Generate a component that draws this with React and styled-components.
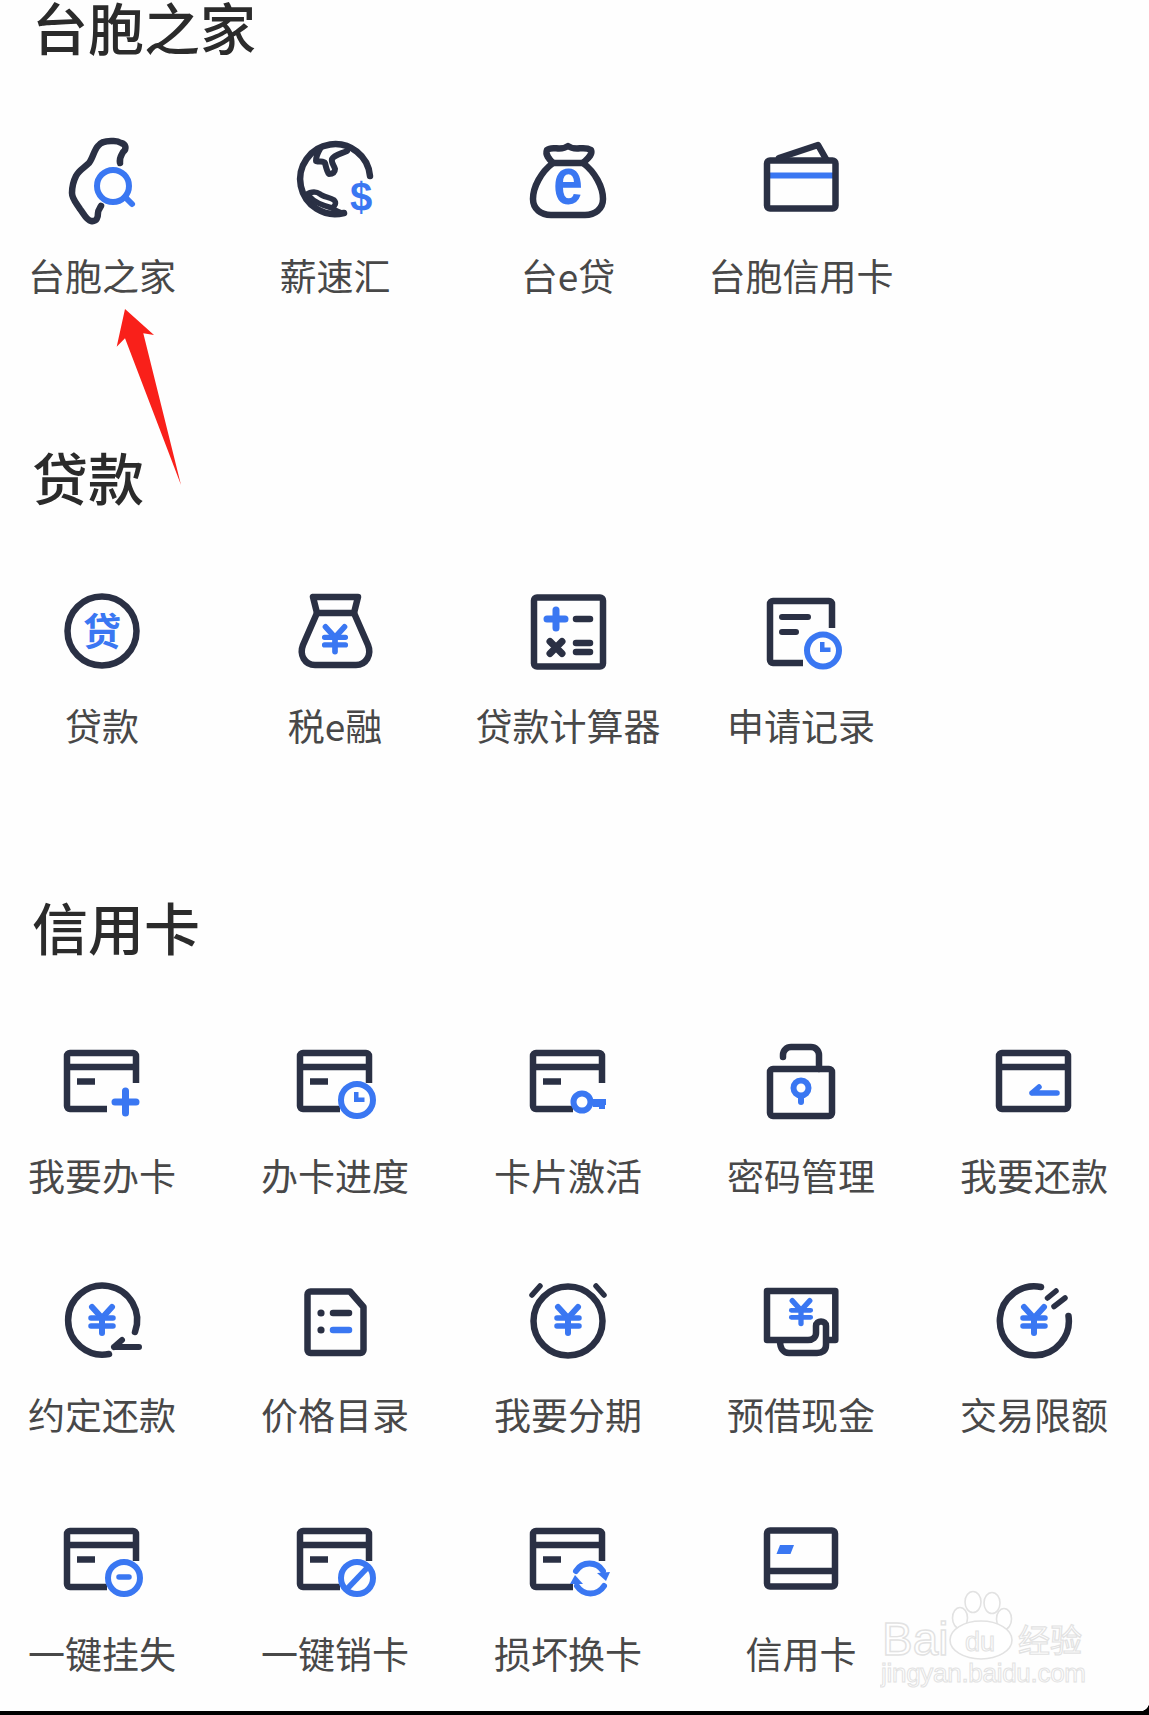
import styled, { createGlobalStyle } from 'styled-components';

const DARK = '#2a3044';
const BLUE = '#3a77f2';

const GlobalStyle = createGlobalStyle`
  html, body { margin: 0; padding: 0; background: #fff; }
`;

const Page = styled.div`
  position: relative;
  width: 1149px;
  height: 1715px;
  overflow: hidden;
  display: flex;
  flex-direction: column;
  background: #fefefe;
  font-family: "Noto Sans CJK SC", "Liberation Sans", sans-serif;
`;

const Section = styled.section`
  margin-bottom: 150px;
  &:last-of-type { margin-bottom: 0; }
`;

const Title = styled.h2`
  margin: 0 0 85px 32px;
  height: 52px;
  font-size: 56px;
  line-height: 52px;
  font-weight: 500;
  color: #2b2b2b;
`;

const Grid = styled.div`
  display: grid;
  grid-template-columns: repeat(5, 204px);
  column-gap: 29px;
  row-gap: 76px;
`;

const Tile = styled.div`
  display: flex;
  flex-direction: column;
  align-items: center;
  gap: 23px;
`;

const Label = styled.span`
  font-size: 37px;
  line-height: 50px;
  color: #484848;
  white-space: nowrap;
`;

const BottomBar = styled.div`
  position: relative;
  margin-top: auto;
  height: 4px;
  background: #000;
  &::before {
    content: '';
    position: absolute;
    right: 0;
    bottom: 100%;
    width: 9px;
    height: 9px;
    background: radial-gradient(circle at 0 0, transparent 9px, #000 9.5px);
  }
`;

const IconSvg = styled.svg`
  display: block;
  width: 90px;
  height: 90px;
  overflow: visible;
`;

const DarkLine = styled.path`
  fill: none;
  stroke: ${DARK};
  stroke-width: ${(p) => p.$w || 6.5};
  stroke-linecap: round;
  stroke-linejoin: round;
`;

const BlueLine = styled.path`
  fill: none;
  stroke: ${BLUE};
  stroke-width: ${(p) => p.$w || 6};
  stroke-linecap: round;
  stroke-linejoin: round;
`;

const DarkFlat = styled(DarkLine)`
  stroke-linecap: butt;
`;

const BlueFlat = styled(BlueLine)`
  stroke-linecap: butt;
`;

const BlueFill = styled.path`
  fill: ${BLUE};
`;

const DarkDot = styled.circle`
  fill: ${DARK};
`;

const BlueRing = styled.circle`
  fill: none;
  stroke: ${BLUE};
  stroke-width: ${(p) => p.$w || 6};
`;

const DarkRing = styled.circle`
  fill: none;
  stroke: ${DARK};
  stroke-width: 6.5;
`;

const GlyphText = styled.text`
  fill: ${BLUE};
  font-family: ${(p) => p.$font || '"Liberation Sans"'}, sans-serif;
  font-weight: 700;
  font-size: ${(p) => p.$size}px;
  text-anchor: middle;
`;

const Arrow = styled.svg`
  position: absolute;
  left: 110px;
  top: 300px;
  width: 80px;
  height: 190px;
`;

const ArrowShape = styled.polygon`
  fill: #f9201a;
`;

const Watermark = styled.svg`
  position: absolute;
  left: 880px;
  top: 1590px;
  width: 215px;
  height: 105px;
`;

const MarkText = styled.text`
  fill: #fff;
  stroke: #e2e2e2;
  stroke-width: ${(p) => p.$w || 1.4};
  font-family: ${(p) => p.$font || '"Liberation Sans"'}, sans-serif;
  font-size: ${(p) => p.$size}px;
`;

const MarkPaw = styled.ellipse`
  fill: #fff;
  stroke: #e2e2e2;
  stroke-width: 1.6;
`;

const Yen = ({ x = 45, y = 30, s = 1 }) => (
  <g transform={`translate(${x} ${y}) scale(${s})`}>
    <BlueLine $w={6} d="M-10 3 L0 14 L10 3" />
    <BlueLine $w={5.5} d="M-11 14 H11 M-11 22 H11" />
    <BlueLine $w={6} d="M0 14 V29" />
  </g>
);

// card with the lower right corner left open for a badge
const OpenCard = () => (
  <>
    <DarkFlat d="M79 46 V19 a3 3 0 0 0 -3 -3 H13 a3 3 0 0 0 -3 3 V69 a3 3 0 0 0 3 3 H50" />
    <DarkFlat d="M10 30 H79" />
    <DarkFlat d="M20 44.5 H38" />
  </>
);

const Hand = () => <BlueFill d="M64 55 h4.5 v5.5 h6 v4.5 h-10.5 z" />;

const icons = {
  taiwan: (
    <>
      <DarkLine d="M63 26 C62 20 65 18 66 15 C70 12 69 7 64 6 C60 3 56 4 54 4 C48 4 43 6 41 9 C37 13 36 21 32 26 C27 31 22 33 19 39 C16 45 15 50 15 56 C15 62 20 67 23 72 C27 77 29 83 34 84 C40 85 41 80 41 76 C41 73 43 71 44 69" />
      <BlueRing cx="56" cy="49" r="16" />
      <BlueLine d="M68 60 L75 67" />
    </>
  ),
  globe: (
    <>
      <DarkLine d="M80 39 A35 35 0 1 0 54 76" />
      <DarkLine $w={6} d="M30 12 C27 17 26 21 26 24 C30 25 34 24 35 26 C36 30 37 35 39 37 C43 37 45 35 45 32 C44 28 41 26 42 22 C44 18 50 17 57 14" />
      <DarkLine $w={5.5} d="M15 58 C20 55 26 54 30 57 C33 60 40 60 44 63 C47 66 45 69 42 71 C46 74 50 76 54 76 M20 60 C24 65 31 68 42 71" />
      <GlyphText $size={40} x="71" y="74">$</GlyphText>
    </>
  ),
  bagE: (
    <>
      <DarkLine d="M24 13 C30 8 37 15 45 9 C53 15 60 8 68 13 C70 18 64 22 60 26 H30 C26 22 22 18 24 13 Z" />
      <DarkLine d="M30 26 C18 35 10 50 10 62 C10 72 18 78 28 78 H62 C72 78 80 72 80 62 C80 50 72 35 60 26" />
      <GlyphText $size={56} transform="translate(45 67) scale(0.95 1.2)">e</GlyphText>
    </>
  ),
  wallet: (
    <>
      <BlueFlat d="M13 38.5 H77" />
      <DarkFlat d="M14 23.5 H76.5 a3 3 0 0 1 3 3 V68.5 a3 3 0 0 1 -3 3 H14 a3 3 0 0 1 -3 -3 V26.5 a3 3 0 0 1 3 -3 Z" />
      <DarkLine d="M23 21 L62 8 L70 22" />
    </>
  ),
  loan: (
    <>
      <DarkRing cx="45" cy="44" r="34.5" />
      <GlyphText $font='"Noto Sans CJK SC"' $size={38} x="45" y="58">贷</GlyphText>
    </>
  ),
  bagYen: (
    <>
      <DarkLine d="M23 10 H68 L64 26 H27 Z" />
      <DarkLine d="M27 26 L13 58 C9 68 15 78 25 78 H66 C76 78 82 68 78 58 L64 26" />
      <Yen y={37} s={0.95} />
    </>
  ),
  calculator: (
    <>
      <DarkFlat d="M14 10.5 H77 a3 3 0 0 1 3 3 V76.5 a3 3 0 0 1 -3 3 H14 a3 3 0 0 1 -3 -3 V13.5 a3 3 0 0 1 3 -3 Z" />
      <BlueLine $w={7} d="M24 32 H42 M33 23 V41" />
      <DarkLine d="M53 32 H67 M53 56 H67 M53 65 H67" />
      <DarkLine $w={7} d="M27 54.5 L39 66.5 M39 54.5 L27 66.5" />
    </>
  ),
  record: (
    <>
      <DarkFlat d="M76 41 V17 a3 3 0 0 0 -3 -3 H17 a3 3 0 0 0 -3 3 V73 a3 3 0 0 0 3 3 H47" />
      <DarkLine $w={6} d="M26 30 H52 M26 45 H40" />
      <BlueRing cx="67" cy="63.5" r="16" />
      <Hand />
    </>
  ),
  cardAdd: (
    <>
      <OpenCard />
      <BlueLine $w={7} d="M58 65 H79 M68.5 54 V76" />
    </>
  ),
  cardClock: (
    <>
      <OpenCard />
      <BlueRing cx="67" cy="63" r="16" />
      <Hand />
    </>
  ),
  cardKey: (
    <>
      <OpenCard />
      <BlueRing cx="59" cy="65" r="8.5" />
      <BlueFlat d="M67 65 H83 M79 65 V72 M73 65 V70" />
    </>
  ),
  lock: (
    <>
      <DarkFlat d="M17 32 H73 a3 3 0 0 1 3 3 V76 a3 3 0 0 1 -3 3 H17 a3 3 0 0 1 -3 -3 V35 a3 3 0 0 1 3 -3 Z" />
      <DarkLine d="M27 20 V18 a8 8 0 0 1 8 -8 H55 a8 8 0 0 1 8 8 V32" />
      <BlueRing cx="45" cy="51" r="7.5" />
      <BlueLine d="M45 60 V65" />
    </>
  ),
  cardRepay: (
    <>
      <DarkFlat d="M13 16 H76 a3 3 0 0 1 3 3 V69 a3 3 0 0 1 -3 3 H13 a3 3 0 0 1 -3 -3 V19 a3 3 0 0 1 3 -3 Z" />
      <DarkFlat d="M10 30 H79" />
      <BlueLine $w={5.5} d="M43 56 H68 M43 56 L50 50" />
    </>
  ),
  yenReturn: (
    <>
      <DarkLine d="M78 56 A34.5 34.5 0 1 0 52 78" />
      <DarkLine $w={6} d="M57 71 H82 M57 71 L65 64" />
      <Yen y={28} />
    </>
  ),
  priceList: (
    <>
      <DarkLine d="M20.5 15.5 H60 L73.5 31 V74 a3 3 0 0 1 -3 3 H20.5 a3 3 0 0 1 -3 -3 V18.5 a3 3 0 0 1 3 -3 Z" />
      <DarkDot cx="31" cy="37" r="3.6" />
      <DarkDot cx="31" cy="54" r="3.6" />
      <DarkLine d="M43 37 H59" />
      <BlueLine $w={6.5} d="M43 54 H59" />
    </>
  ),
  alarm: (
    <>
      <DarkRing cx="45" cy="45" r="34.5" />
      <DarkLine $w={5.5} d="M9 19 L17 10 M81 19 L73 10" />
      <Yen y={28} />
    </>
  ),
  cash: (
    <>
      <DarkLine d="M70 64 H79.3 V15 H11 V64 H52 C57 64 60 61 60 57 V50 C60 44 70 44 70 50 V69 C70 75 66 77 61 77 H33 C28 77 24 73 24 65" />
      <Yen y={22} s={0.88} />
    </>
  ),
  limit: (
    <>
      <DarkLine d="M79.5 40 A34.5 34.5 0 1 1 52 11" />
      <DarkLine $w={5.5} d="M58.5 22 L67 15 M65 30.5 L76 22" />
      <Yen y={28} />
    </>
  ),
  cardLost: (
    <>
      <OpenCard />
      <BlueRing cx="67" cy="63" r="16" />
      <BlueLine $w={5.5} d="M62 62 H72" />
    </>
  ),
  cardCancel: (
    <>
      <OpenCard />
      <BlueRing cx="67" cy="63" r="16" />
      <BlueFlat $w={5.5} d="M57 74 L78 52" />
    </>
  ),
  cardSwap: (
    <>
      <OpenCard />
      <BlueLine d="M53 56 A16 16 0 0 1 80 56" />
      <BlueFill d="M74 58 L87 57 L83 66 Z" />
      <BlueLine d="M81 71 A16 16 0 0 1 54 71" />
      <BlueFill d="M60 69 L47 69 L52 60 Z" />
    </>
  ),
  card: (
    <>
      <DarkFlat d="M14 15.5 H76 a3 3 0 0 1 3 3 V68.5 a3 3 0 0 1 -3 3 H14 a3 3 0 0 1 -3 -3 V18.5 a3 3 0 0 1 3 -3 Z" />
      <DarkFlat d="M11 56 H79" />
      <BlueFill d="M24 30 H38 L34.5 39 H20.5 Z" />
    </>
  ),
};

const sections = [
  {
    title: '台胞之家',
    items: [
      ['台胞之家', 'taiwan'],
      ['薪速汇', 'globe'],
      ['台e贷', 'bagE'],
      ['台胞信用卡', 'wallet'],
    ],
  },
  {
    title: '贷款',
    items: [
      ['贷款', 'loan'],
      ['税e融', 'bagYen'],
      ['贷款计算器', 'calculator'],
      ['申请记录', 'record'],
    ],
  },
  {
    title: '信用卡',
    items: [
      ['我要办卡', 'cardAdd'],
      ['办卡进度', 'cardClock'],
      ['卡片激活', 'cardKey'],
      ['密码管理', 'lock'],
      ['我要还款', 'cardRepay'],
      ['约定还款', 'yenReturn'],
      ['价格目录', 'priceList'],
      ['我要分期', 'alarm'],
      ['预借现金', 'cash'],
      ['交易限额', 'limit'],
      ['一键挂失', 'cardLost'],
      ['一键销卡', 'cardCancel'],
      ['损坏换卡', 'cardSwap'],
      ['信用卡', 'card'],
    ],
  },
];

export default function App() {
  return (
    <Page>
      <GlobalStyle />
      {sections.map((section) => (
        <Section key={section.title}>
          <Title>{section.title}</Title>
          <Grid>
            {section.items.map(([label, icon]) => (
              <Tile key={label}>
                <IconSvg viewBox="0 0 90 90">{icons[icon]}</IconSvg>
                <Label>{label}</Label>
              </Tile>
            ))}
          </Grid>
        </Section>
      ))}
      <BottomBar />
      <Arrow viewBox="110 300 80 190">
        <ArrowShape points="125,309 154,335 143.3,333.3 181,485 125,338.3 116.7,346.7" />
      </Arrow>
      <Watermark viewBox="0 0 215 105">
        <MarkPaw cx="93" cy="12" rx="8" ry="10.5" />
        <MarkPaw cx="112" cy="13" rx="8" ry="10.5" />
        <MarkPaw cx="80" cy="28" rx="7.5" ry="10.5" />
        <MarkPaw cx="124" cy="29" rx="7.5" ry="10.5" />
        <MarkPaw cx="101" cy="50" rx="31" ry="19" />
        <MarkText $size={46} x="2" y="65">Bai</MarkText>
        <MarkText $w={1.1} $size={27} x="85" y="61">du</MarkText>
        <MarkText $font='"Noto Sans CJK SC"' $w={1.2} $size={32} x="138" y="62">经验</MarkText>
        <MarkText $w={1} $size={26} x="1" y="92" textLength="205">jingyan.baidu.com</MarkText>
      </Watermark>
    </Page>
  );
}
